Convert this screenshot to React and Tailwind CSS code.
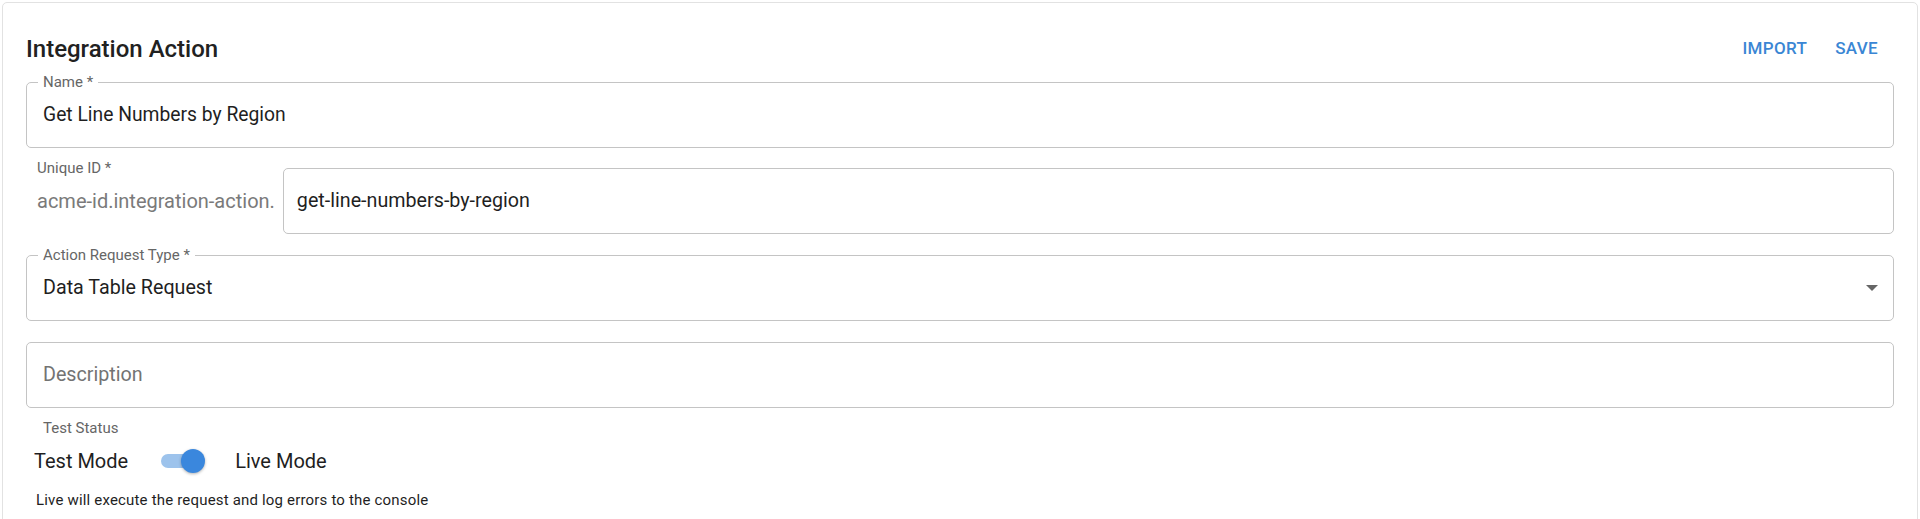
import React from "react";

function Outlined({ label, children, className = "" }) {
  return (
    <div className={`relative h-[66px] rounded-[5px] border border-[#c4c4c4] flex items-center pl-[16px] pr-[16px] ${className}`}>
      {label && (
        <span className="absolute left-[11px] top-[-10px] bg-white px-[5px] text-[15px] leading-[18px] text-[#666666]">
          {label}
        </span>
      )}
      {children}
    </div>
  );
}

export default function App() {
  return (
    <div className="bg-white p-[2px] pb-0" style={{ fontFamily: "Roboto, 'Liberation Sans', sans-serif" }}>
      <div className="rounded-[5px] border border-[#e2e2e2] px-[23px] pt-[26px] pb-[40px]">
        <div className="flex h-[40px] items-center justify-between">
          <h1 className="text-[24px] font-medium leading-[32px] text-[#212121]">Integration Action</h1>
          <div className="flex items-center gap-[28px] pr-[16px] text-[17px] font-medium tracking-[0.02em] text-[#3a86d4]">
            <span>IMPORT</span>
            <span>SAVE</span>
          </div>
        </div>

        <Outlined label="Name *" className="mt-[13px]">
          <span className="text-[19.3px] leading-[24px] text-[#1f1f1f]">Get Line Numbers by Region</span>
        </Outlined>

        <div className="mt-[11px] flex items-start">
          <div className="pl-[11px]">
            <div className="text-[15px] leading-[18px] text-[#666666]">Unique ID *</div>
            <div className="mt-[12px] text-[20px] leading-[24px] text-[#7a7a7a]">acme-id.integration-action.</div>
          </div>
          <div className="ml-[8px] mt-[9px] flex h-[66px] flex-1 items-center rounded-[5px] border border-[#c4c4c4] pl-[13px]">
            <span className="text-[19.7px] leading-[24px] text-[#1f1f1f]">get-line-numbers-by-region</span>
          </div>
        </div>

        <Outlined label="Action Request Type *" className="mt-[21px] justify-between">
          <span className="text-[19.7px] leading-[24px] text-[#1f1f1f]">Data Table Request</span>
          <svg width="14" height="8" viewBox="0 0 14 8" className="mr-[-2px]">
            <path d="M1 1l6 6 6-6z" fill="#666666" />
          </svg>
        </Outlined>

        <Outlined className="mt-[21px]">
          <span className="text-[19.7px] leading-[24px] text-[#737373]">Description</span>
        </Outlined>

        <div className="mt-[11px] pl-[17px] text-[15px] leading-[18px] text-[#666666]">Test Status</div>

        <div className="mt-[12px] flex items-center pl-[8px] text-[20px] leading-[24px] text-[#1f1f1f]">
          <span>Test Mode</span>
          <div className="relative ml-[33px] h-[14px] w-[42px] rounded-full bg-[#9dc3ec]">
            <span className="absolute right-[-2px] top-[-5px] h-[24px] w-[24px] rounded-full bg-[#3a87dd] shadow-[0_1px_3px_rgba(0,0,0,0.3)]" />
          </div>
          <span className="ml-[32px]">Live Mode</span>
        </div>

        <div className="mt-[18px] pl-[10px] text-[15px] leading-[18px] tracking-[0.012em] text-[#1f1f1f]">
          Live will execute the request and log errors to the console
        </div>
      </div>
    </div>
  );
}
